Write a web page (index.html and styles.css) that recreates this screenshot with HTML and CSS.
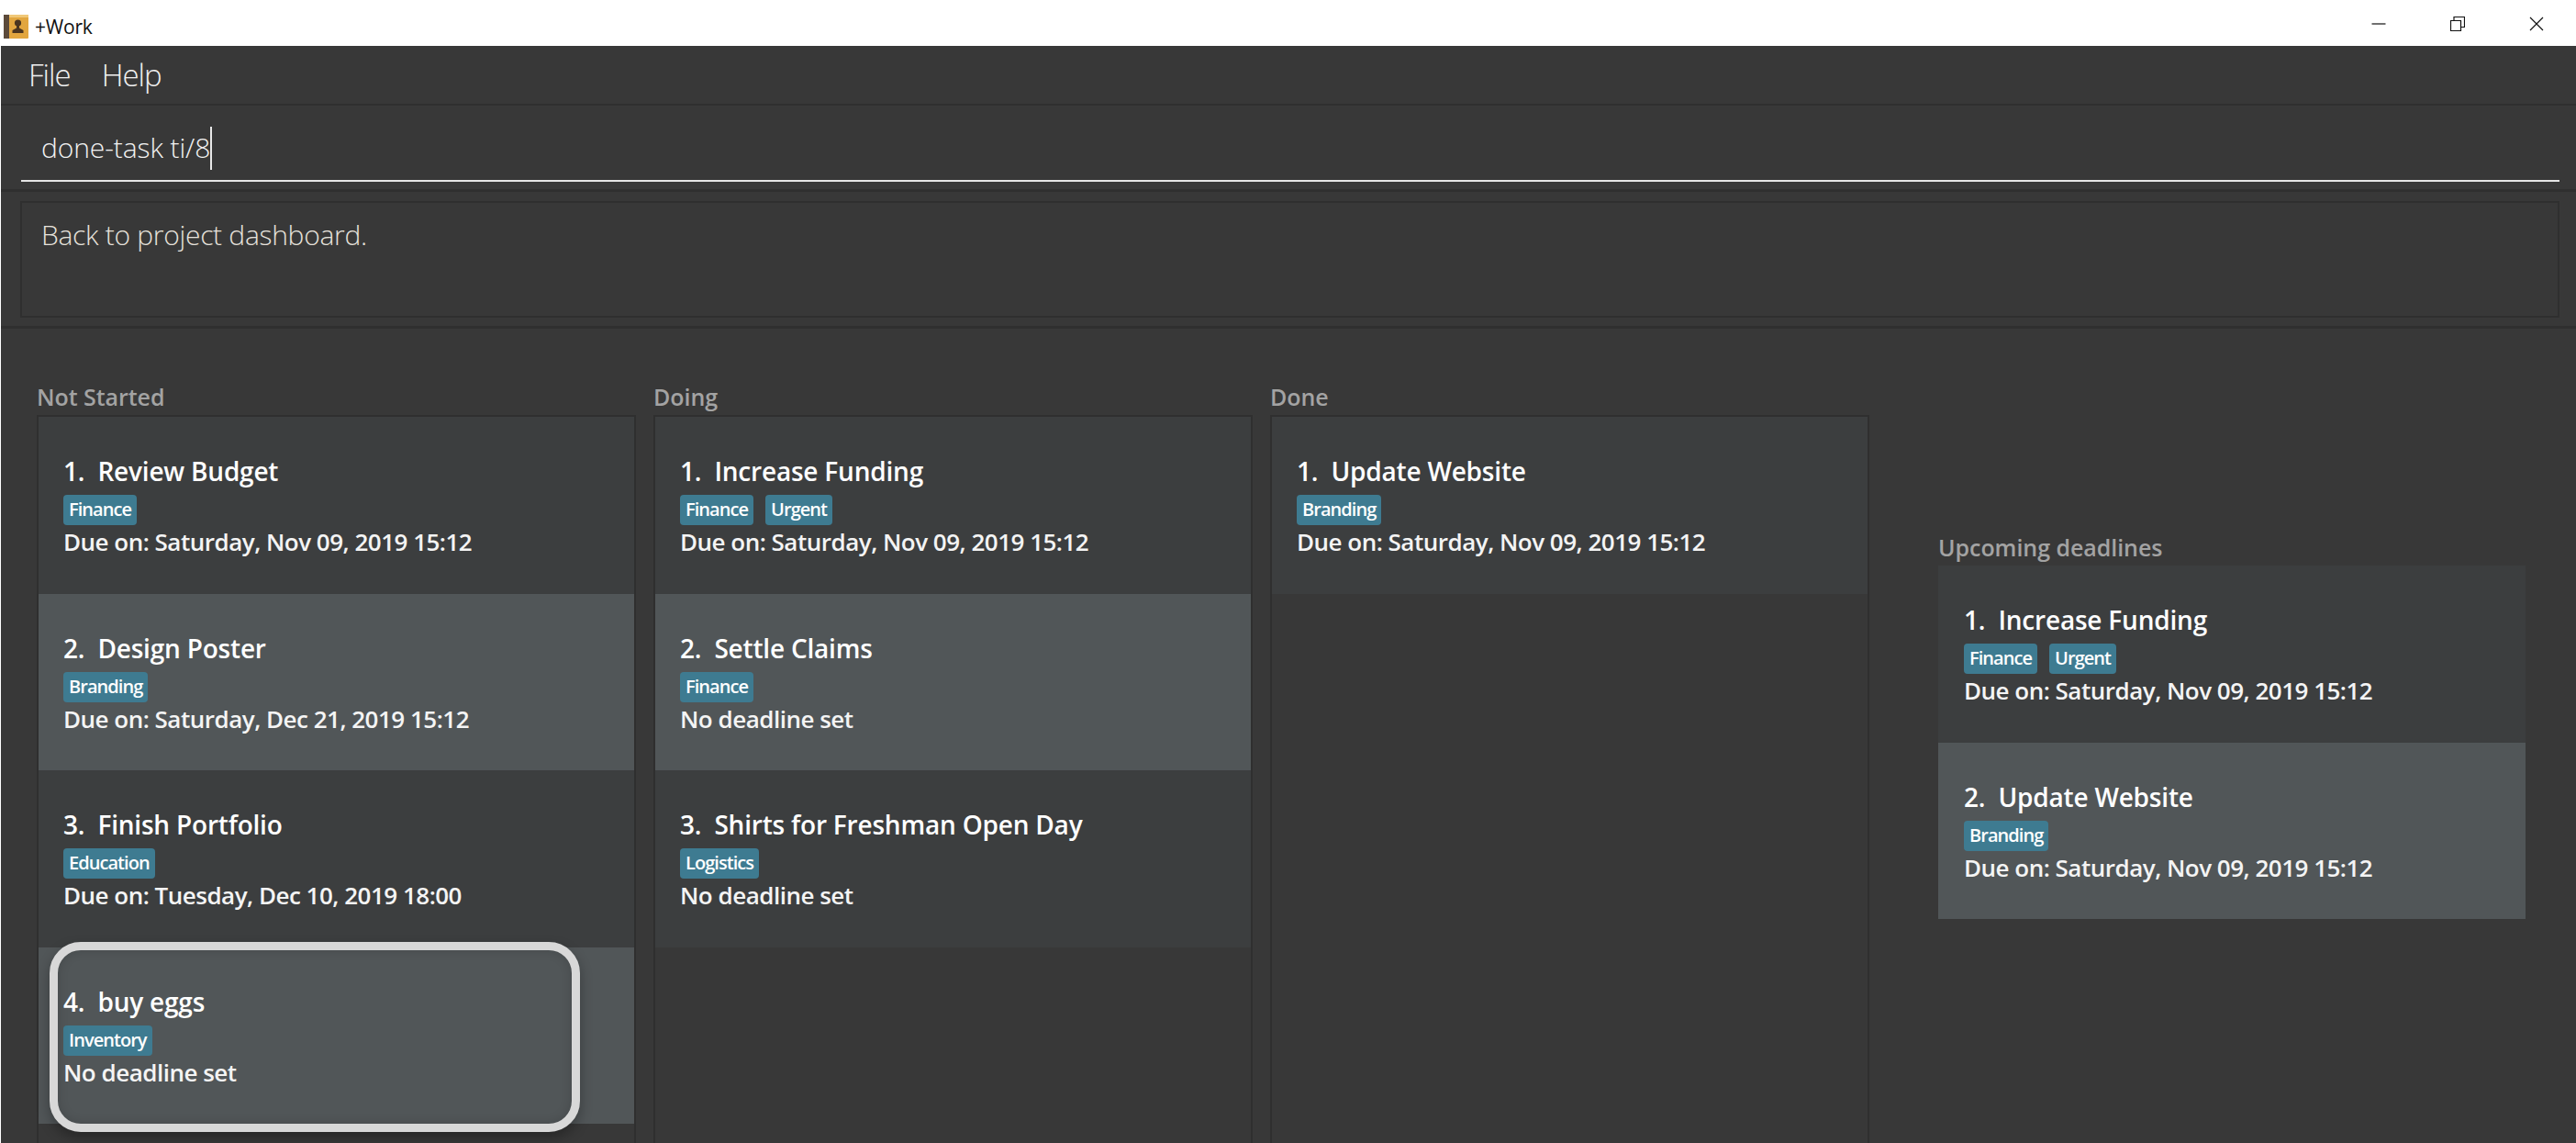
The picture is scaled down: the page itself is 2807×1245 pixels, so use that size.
FILE: index.html
```html
<!DOCTYPE html>
<html lang="en">
<head>
    <meta charset="UTF-8">
    <title>+Work</title>
    <link rel="stylesheet" href="styles.css">
</head>
<body>

    <div class="title-bar">
        <svg class="app-icon" width="27" height="26" viewBox="0 0 27 26">
            <rect x="0" y="0" width="27" height="26" rx="1" fill="#e2a63f"/>
            <rect x="0" y="0" width="6" height="26" fill="#5c4a3a"/>
            <rect x="6" y="0" width="21" height="3" fill="#f0c878"/>
            <circle cx="15.5" cy="9" r="3.6" fill="#4a3520"/>
            <path d="M14 12h3v2.5l4.5 2.5v3h-12v-3l4.5-2.5z" fill="#4a3520"/>
        </svg>
        <span class="app-title">+Work</span>
        <div class="window-buttons">
            <svg width="16" height="16" viewBox="0 0 16 16"><path d="M0.5 8h15" stroke="#111" fill="none" stroke-width="1.2"/></svg>
            <svg width="16" height="16" viewBox="0 0 16 16"><path d="M0.5 4.5h11v11h-11zM4 4.5v-4h11.500v11h-4" stroke="#111" fill="none" stroke-width="1.2"/></svg>
            <svg width="16" height="16" viewBox="0 0 16 16"><path d="M1 1l14 14M15 1l-14 14" stroke="#111" fill="none" stroke-width="1.2"/></svg>
        </div>
    </div>

    <div class="app">
        <div class="menu-bar">
            <span>File</span>
            <span>Help</span>
        </div>

        <div class="command-box">
            <div class="command-input">done-task ti/8<span class="caret"></span></div>
        </div>

        <div class="result-wrap">
            <div class="result-box">Back to project dashboard.</div>
        </div>

        <div class="panels">
            <div class="column">
                <div class="column-label">Not Started</div>
                <div class="task-list">
                    <div class="card">
                        <div class="card-title">1.&nbsp; Review Budget</div>
                        <div class="tags"><span class="tag">Finance</span></div>
                        <div class="card-date">Due on: Saturday, Nov 09, 2019 15:12</div>
                    </div>
                    <div class="card alt">
                        <div class="card-title">2.&nbsp; Design Poster</div>
                        <div class="tags"><span class="tag">Branding</span></div>
                        <div class="card-date">Due on: Saturday, Dec 21, 2019 15:12</div>
                    </div>
                    <div class="card">
                        <div class="card-title">3.&nbsp; Finish Portfolio</div>
                        <div class="tags"><span class="tag">Education</span></div>
                        <div class="card-date">Due on: Tuesday, Dec 10, 2019 18:00</div>
                    </div>
                    <div class="card alt">
                        <div class="card-title">4.&nbsp; buy eggs</div>
                        <div class="tags"><span class="tag">Inventory</span></div>
                        <div class="card-date">No deadline set</div>
                        <div class="ring"></div>
                    </div>
                </div>
            </div>

            <div class="column">
                <div class="column-label">Doing</div>
                <div class="task-list">
                    <div class="card">
                        <div class="card-title">1.&nbsp; Increase Funding</div>
                        <div class="tags"><span class="tag">Finance</span><span class="tag">Urgent</span></div>
                        <div class="card-date">Due on: Saturday, Nov 09, 2019 15:12</div>
                    </div>
                    <div class="card alt">
                        <div class="card-title">2.&nbsp; Settle Claims</div>
                        <div class="tags"><span class="tag">Finance</span></div>
                        <div class="card-date">No deadline set</div>
                    </div>
                    <div class="card">
                        <div class="card-title">3.&nbsp; Shirts for Freshman Open Day</div>
                        <div class="tags"><span class="tag">Logistics</span></div>
                        <div class="card-date">No deadline set</div>
                    </div>
                </div>
            </div>

            <div class="column">
                <div class="column-label">Done</div>
                <div class="task-list">
                    <div class="card">
                        <div class="card-title">1.&nbsp; Update Website</div>
                        <div class="tags"><span class="tag">Branding</span></div>
                        <div class="card-date">Due on: Saturday, Nov 09, 2019 15:12</div>
                    </div>
                </div>
            </div>

            <div class="deadlines">
                <div class="column-label">Upcoming deadlines</div>
                <div class="card">
                    <div class="card-title">1.&nbsp; Increase Funding</div>
                    <div class="tags"><span class="tag">Finance</span><span class="tag">Urgent</span></div>
                    <div class="card-date">Due on: Saturday, Nov 09, 2019 15:12</div>
                </div>
                <div class="card alt">
                    <div class="card-title">2.&nbsp; Update Website</div>
                    <div class="tags"><span class="tag">Branding</span></div>
                    <div class="card-date">Due on: Saturday, Nov 09, 2019 15:12</div>
                </div>
            </div>
        </div>
    </div>

</body>
</html>
```

FILE: styles.css
```css
/* Page and window */
html, body {
    height: 100%;
}

body {
    margin: 0;
    font-family: "Open Sans", "Noto Sans", sans-serif;
    background-color: #fff;
    overflow: hidden;
}

.title-bar {
    height: 50px;
    display: flex;
    align-items: center;
    box-sizing: border-box;
    padding: 8px 0 0 4px;
    background-color: #fff;
    color: #111;
}

.app-title {
    margin-left: 7px;
    font-size: 21px;
    letter-spacing: -0.2px;
}

.window-buttons {
    margin-left: auto;
    display: flex;
    gap: 70px;
    padding-right: 35px;
    margin-top: -6px;
}

.app {
    height: 1195px;
    margin-left: 1px;
    background-color: #383838;
    display: flex;
    flex-direction: column;
    overflow: hidden;
}

/* Menu */
.menu-bar {
    height: 65px;
    box-sizing: border-box;
    display: flex;
    align-items: center;
    gap: 34px;
    padding-left: 30px;
    font-size: 33px;
    font-weight: 300;
    letter-spacing: -1px;
    color: #f0f0f0;
    border-bottom: 2px solid #2f2f2f;
}

/* Command box */
.command-box {
    height: 94px;
    box-sizing: border-box;
    padding: 0 18px 0 22px;
    border-bottom: 3px solid #2f2f2f;
}

.command-input {
    height: 83px;
    box-sizing: border-box;
    padding: 23px 0 0 22px;
    line-height: 45px;
    font-size: 30px;
    font-weight: 300;
    letter-spacing: -0.1px;
    color: #f2f2f2;
    border-bottom: 2px solid #e4e4e4;
    white-space: nowrap;
}

.caret {
    display: inline-block;
    width: 2px;
    height: 47px;
    background-color: #e8e8e8;
    vertical-align: -13px;
}

/* Result box */
.result-wrap {
    height: 149px;
    box-sizing: border-box;
    padding: 10px 18px 0 21px;
    border-bottom: 3px solid #2f2f2f;
}

.result-box {
    height: 127px;
    box-sizing: border-box;
    padding: 15px 0 0 21px;
    border: 2px solid #2f2f2f;
    font-size: 30px;
    font-weight: 300;
    letter-spacing: -0.3px;
    line-height: 40px;
    color: #e6e2dc;
}

/* Kanban columns */
.panels {
    flex: 1;
    display: flex;
    gap: 19px;
    padding: 58px 0 0 39px;
    min-height: 0;
}

.column {
    width: 653px;
    display: flex;
    flex-direction: column;
}

.column-label {
    height: 36px;
    line-height: 32px;
    font-size: 25px;
    font-weight: 600;
    letter-spacing: -0.05px;
    color: #a3a3a3;
}

.task-list {
    flex: 1;
    border: 2px solid #2f2f2f;
    border-bottom: none;
}

.deadlines {
    width: 640px;
    margin-left: 56px;
    padding-top: 162px;
}

.deadlines .column-label {
    height: 38px;
    line-height: 36px;
}

/* Task cards */
.card {
    position: relative;
    height: 192.500px;
    box-sizing: border-box;
    padding: 39px 0 0 27px;
    background-color: #3c3e3f;
    color: #f4f4f4;
}

.card.alt {
    background-color: #515658;
}

.card-title {
    height: 40px;
    line-height: 40px;
    font-size: 28px;
    font-weight: 600;
    letter-spacing: -0.2px;
    color: #fff;
}

.tags {
    display: flex;
    gap: 13px;
    margin-top: 6px;
}

.tag {
    height: 33px;
    line-height: 32px;
    box-sizing: border-box;
    padding: 0 6px;
    border-radius: 4px;
    background-color: #3e7b91;
    font-size: 20px;
    font-weight: 600;
    letter-spacing: -0.95px;
    color: #fff;
}

.card-date {
    margin-top: -2px;
    height: 40px;
    line-height: 40px;
    font-size: 26px;
    font-weight: 600;
    letter-spacing: -0.5px;
    white-space: nowrap;
}

.deadlines .card {
    padding-left: 28px;
}

/* Highlight drawn over the new task */
.ring {
    position: absolute;
    top: -6px;
    left: 12px;
    width: 578px;
    height: 207px;
    box-sizing: border-box;
    border: 9px solid #d8d8d8;
    border-radius: 34px;
    box-shadow: 0 6px 14px rgba(0, 0, 0, 0.3), inset 0 0 12px rgba(0, 0, 0, 0.15);
}
```
